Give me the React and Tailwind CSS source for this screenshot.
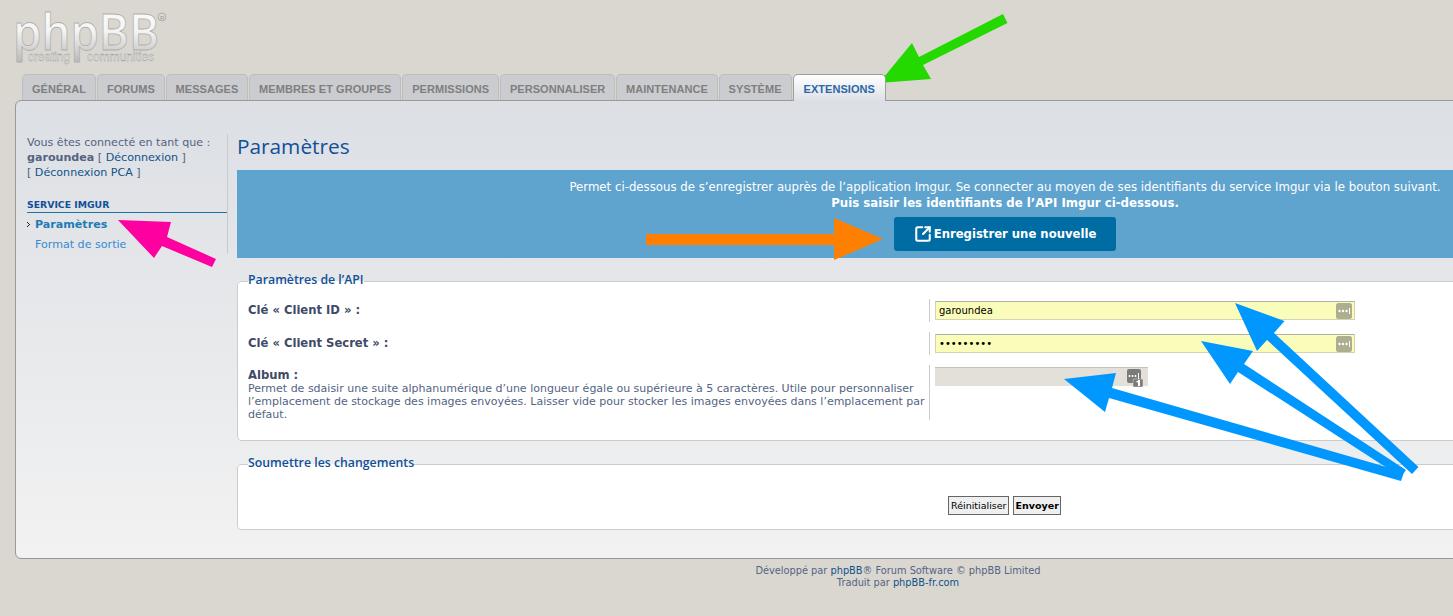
import React from "react";
import { SquareArrowOutUpRight } from "lucide-react";

const dj = "font-['DejaVu_Sans',Verdana,sans-serif]";

const tabs = ["GÉNÉRAL", "FORUMS", "MESSAGES", "MEMBRES ET GROUPES", "PERMISSIONS", "PERSONNALISER", "MAINTENANCE", "SYSTÈME"];

function Logo() {
  return (
    <svg width="170" height="66" viewBox="0 0 170 66" className="block">
      <defs>
        <linearGradient id="lg" x1="0" y1="0" x2="0" y2="1">
          <stop offset="0" stopColor="#ffffff" />
          <stop offset="0.5" stopColor="#f4f4f4" />
          <stop offset="1" stopColor="#b4b4b4" />
        </linearGradient>
      </defs>
      <text x="13" y="50" fontFamily="'Open Sans',sans-serif" fontSize="50" fontWeight="600" fill="url(#lg)" stroke="#b0b0ac" strokeWidth="0.8" textLength="146" lengthAdjust="spacingAndGlyphs">phpBB</text>
      <text x="28" y="61" fontFamily="'Liberation Sans',sans-serif" fontSize="12" fill="#f4f4f4" stroke="#8f8f8f" strokeWidth="0.35" textLength="42" lengthAdjust="spacingAndGlyphs">creating</text>
      <text x="87" y="61" fontFamily="'Liberation Sans',sans-serif" fontSize="12" fill="#f4f4f4" stroke="#8f8f8f" strokeWidth="0.35" textLength="67" lengthAdjust="spacingAndGlyphs">communities</text>
      <circle cx="162" cy="17" r="4" fill="none" stroke="#b0b0ac" strokeWidth="1" />
      <text x="160" y="20" fontFamily="'Liberation Sans',sans-serif" fontSize="6" fill="#9a9a96">R</text>
    </svg>
  );
}

function DotsIcon() {
  return (
    <svg width="16" height="16" viewBox="0 0 16 16" className="absolute right-[3px] top-[2px]">
      <rect width="16" height="16" rx="2.5" fill="#adad90" />
      <circle cx="3.5" cy="8" r="1.2" fill="#fff" />
      <circle cx="7" cy="8" r="1.2" fill="#fff" />
      <circle cx="10.5" cy="8" r="1.2" fill="#fff" />
      <rect x="13" y="5" width="1" height="6" fill="#fff" />
    </svg>
  );
}

function BadgeIcon() {
  return (
    <svg width="16" height="18" viewBox="0 0 16 18" className="absolute right-[5px] top-[1px]">
      <rect width="14" height="14" rx="2" fill="#7b7b7b" />
      <rect x="6" y="10" width="10" height="8" rx="1" fill="#7b7b7b" stroke="#e3dfd9" strokeWidth="0.5" />
      <circle cx="2.5" cy="7" r="1" fill="#fff" />
      <circle cx="5.5" cy="7" r="1" fill="#fff" />
      <circle cx="8.5" cy="7" r="1" fill="#fff" />
      <rect x="11" y="4" width="1" height="6" fill="#fff" />
      <rect x="11" y="11" width="2" height="6" fill="#fff" />
      <rect x="9.5" y="12" width="2" height="1.4" fill="#fff" />
    </svg>
  );
}

function Field({ type = "text", value }) {
  return (
    <div className="relative w-[420px] h-[19px]">
      <input
        readOnly
        type={type}
        value={value}
        className={`block w-full h-full bg-[#fafdb9] border border-[#d4d4b4] border-t-[#b0b0a8] pl-[3px] text-[10px] text-black outline-none ${dj}`}
      />
      <DotsIcon />
    </div>
  );
}

function Arrows() {
  return (
    <svg width="1453" height="616" viewBox="0 0 1453 616" className="absolute left-0 top-0 pointer-events-none">
      <polygon fill="#23d900" points="1003,14 1007.5,23 923,65 931,79 879,83 912,43 919,57" />
      <polygon fill="#ff00a0" points="118,220 171,222 167,237 216,259 212,267 162,246 154,258" />
      <polygon fill="#ff8000" points="646,234 834,234 834,218 883,239 834,260 834,245 646,245" />
      <polygon fill="#0098ff" points="1235,303 1284.5,321 1274,333 1418.5,467 1412,474 1267,340 1257,351" />
      <polygon fill="#0098ff" points="1201,341 1253,351 1244,364 1406,470 1401,477 1238,372 1230,384" />
      <polygon fill="#0098ff" points="1064,379 1116,373 1112,388 1404,472 1401,481 1109,398 1105,412" />
    </svg>
  );
}

const labelCls = "w-[681px] shrink-0 text-[11.6px] font-bold text-[#3f4b66] pt-[4px] leading-[14px]";
const legendCls = "pb-[2px] font-['Open_Sans',sans-serif] text-[12.3px] leading-[14px] font-semibold text-[#115098]";

export default function App() {
  return (
    <div className={`relative w-[1453px] h-[616px] overflow-hidden bg-[#dad7d0] ${dj}`}>
      <div className="w-[1796px]">
        <div className="h-[74px]">
          <Logo />
        </div>

        <div className="relative z-10 flex items-end h-[27px] pl-[22px] gap-[0.75px] font-['Liberation_Sans',Arial,sans-serif] text-[11px] font-bold tracking-[0.05px]">
          {tabs.map((t) => (
            <div key={t} className="h-[26px] mb-[1px] px-[9px] pt-[7px] leading-[14px] text-[#7f7f7f] bg-[#cbccd0] border border-b-0 border-[#bdbdbb] rounded-t-[5px] whitespace-nowrap">
              {t}
            </div>
          ))}
          <div className="h-[27px] ml-[0.25px] px-[10px] pt-[7px] leading-[14px] text-[#2968a8] bg-gradient-to-b from-white to-[#dde0e5] border border-b-0 border-[#9e9e9e] rounded-t-[5px] whitespace-nowrap">
            EXTENSIONS
          </div>
        </div>

        <div className="ml-[15px] w-[1767px] h-[459px] -mt-[1px] flex pl-[11px] pr-[8px] pt-[33px] bg-gradient-to-b from-[#dcdfe4] to-[#f2f2f2] border border-[#999] rounded-[6px]">
          <aside className="w-[201px] shrink-0 h-[120px] border-r border-[#c8cacd] text-[11.1px] leading-[15px] text-[#536482]">
            <p className="mt-[1px]">Vous êtes connecté en tant que :</p>
            <p><b>garoundea</b> [ <span className="text-[#105289]">Déconnexion</span> ]</p>
            <p>[ <span className="text-[#105289]">Déconnexion PCA</span> ]</p>
            <div className="mt-[18px] h-[15px] leading-[13px] text-[9.3px] font-bold text-[#115098] border-b border-[#1b75ac]">SERVICE IMGUR</div>
            <div className="relative mt-[3px] pl-[8px] font-bold text-[#1f7cb5] leading-[17px]">
              <svg width="4" height="5" viewBox="0 0 4 5" className="absolute left-0 top-[6px]">
                <rect x="0" y="0" width="1" height="1" fill="#222" />
                <rect x="1" y="1" width="1" height="1" fill="#222" />
                <rect x="2" y="2" width="1" height="1" fill="#222" />
                <rect x="1" y="3" width="1" height="1" fill="#222" />
                <rect x="0" y="4" width="1" height="1" fill="#222" />
              </svg>
              Paramètres
            </div>
            <div className="mt-[3px] pl-[8px] text-[#368ad2] leading-[17px]">Format de sortie</div>
          </aside>

          <main className="ml-[9px] flex-1 min-w-0">
            <h1 className="h-[38px] -mt-[2px] font-['Open_Sans',sans-serif] text-[20.8px] leading-[28px] text-[#115098]">Paramètres</h1>
            <div className="h-[88px] bg-[#5fa3cf] text-white text-center pt-[9px] text-[11.75px] leading-[16px]">
              <p>Permet ci-dessous de s’enregistrer auprès de l’application Imgur. Se connecter au moyen de ses identifiants du service Imgur via le bouton suivant.</p>
              <p className="font-bold">Puis saisir les identifiants de l’API Imgur ci-dessous.</p>
              <div className="mt-[6px] mx-auto w-[222px] h-[34px] flex items-center justify-center gap-[2px] bg-[#006ca4] rounded-[3px] text-[11.65px] font-bold">
                <SquareArrowOutUpRight size={18} strokeWidth={2.75} />
                Enregistrer une nouvelle
              </div>
            </div>

            <fieldset className="mt-[15px] h-[168px] bg-white border border-[#ccc] rounded-[4px] pl-[10px] relative">
              <legend className={legendCls}>Paramètres de l’API</legend>
              <div className="flex mt-[10px]">
                <div className={labelCls}>Clé « Client ID » :</div>
                <div className="border-l border-[#ccc] pl-[5px] py-[2px]"><Field value="garoundea" /></div>
              </div>
              <div className="flex mt-[10px]">
                <div className={labelCls}>Clé « Client Secret » :</div>
                <div className="border-l border-[#ccc] pl-[5px] py-[2px]"><Field type="password" value="garoundea" /></div>
              </div>
              <div className="flex mt-[10px]">
                <div className="w-[681px] shrink-0 pr-[3px] pt-[4px] text-[11px] leading-[13px] text-[#536482]">
                  <div className="text-[11.6px] font-bold text-[#3f4b66]">Album :</div>
                  Permet de sdaisir une suite alphanumérique d’une longueur égale ou supérieure à 5 caractères. Utile pour personnaliser l’emplacement de stockage des images envoyées. Laisser vide pour stocker les images envoyées dans l’emplacement par défaut.
                </div>
                <div className="border-l border-[#ccc] pl-[5px] pt-[2px] h-[55px]">
                  <div className="relative w-[213px] h-[19px] bg-[#e3dfd9] border-t border-[#c4c2bc]"><BadgeIcon /></div>
                </div>
              </div>
            </fieldset>

            <fieldset className="mt-[15px] h-[74px] bg-white border border-[#ccc] rounded-[4px] pl-[10px]">
              <legend className={legendCls}>Soumettre les changements</legend>
              <div className="flex justify-center gap-[4px] mt-[24px] pr-[10.5px]">
                <div className="w-[61px] h-[19px] bg-[#efefef] border border-[#666] text-[9.5px] leading-[17px] text-center text-black">Réinitialiser</div>
                <div className="w-[48px] h-[19px] bg-[#efefef] border border-[#666] text-[9.5px] leading-[17px] text-center font-bold text-black">Envoyer</div>
              </div>
            </fieldset>
          </main>
        </div>

        <footer className="mt-[5.5px] text-center text-[9.8px] leading-[12px] text-[#536482]">
          <p>Développé par <span className="text-[#105289]">phpBB</span>® Forum Software © phpBB Limited</p>
          <p>Traduit par <span className="text-[#105289]">phpBB-fr.com</span></p>
        </footer>
      </div>
      <Arrows />
    </div>
  );
}
